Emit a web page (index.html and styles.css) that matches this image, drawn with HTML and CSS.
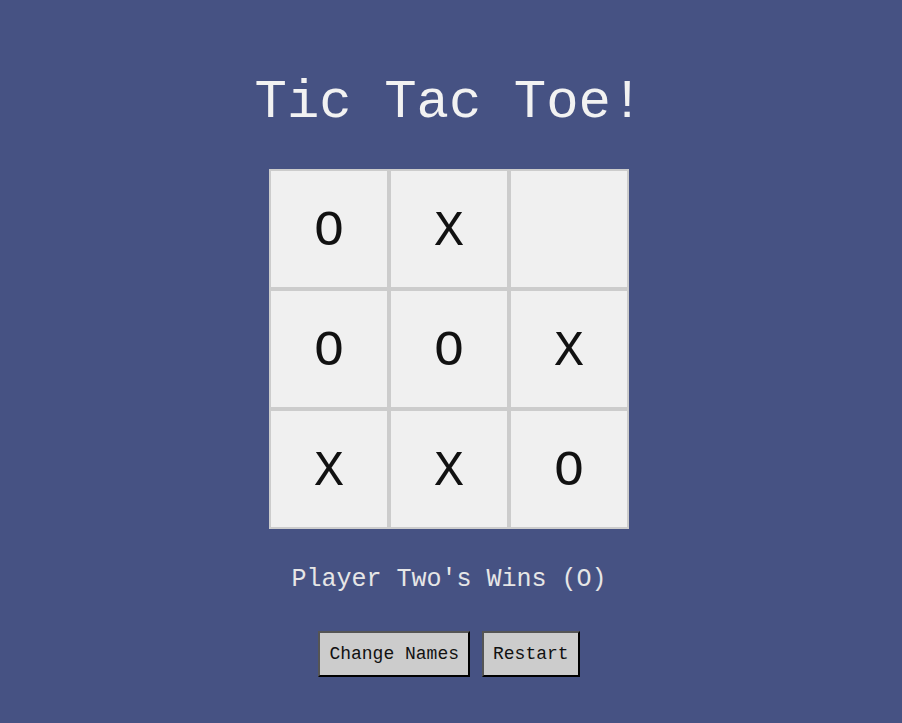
FILE: index.html
```html
<!DOCTYPE html>
<html lang="en">
  <head>
    <meta charset="UTF-8" />
    <meta name="viewport" content="width=device-width, initial-scale=1.0" />
    <title>Tic Tac Toe</title>
    <link rel="stylesheet" href="styles.css">
  </head>
  <body>
    <main class="game">
      <h1 class="title">Tic Tac Toe!</h1>
      <div class="board">
        <div class="cell">O</div>
        <div class="cell">X</div>
        <div class="cell"></div>
        <div class="cell">O</div>
        <div class="cell">O</div>
        <div class="cell">X</div>
        <div class="cell">X</div>
        <div class="cell">X</div>
        <div class="cell">O</div>
      </div>
      <p class="status">Player Two's Wins (O)</p>
      <div class="controls">
        <button class="btn">Change Names</button>
        <button class="btn">Restart</button>
      </div>
    </main>
  </body>
</html>
```

FILE: styles.css
```css
body {
  margin: 0;
  background-color: #465283;
  font-family: "Liberation Mono", "Courier New", monospace;
}

.game {
  display: flex;
  flex-direction: column;
  align-items: center;
  padding: 73px 4px 0 0;
}

.title {
  margin: 0;
  font-size: 54px;
  font-weight: normal;
  line-height: 60px;
  color: #f2f2f2;
}

.board {
  display: grid;
  grid-template-columns: repeat(3, 120px);
  grid-template-rows: repeat(3, 120px);
  margin-top: 36px;
}

.cell {
  display: flex;
  justify-content: center;
  align-items: center;
  box-sizing: border-box;
  padding-top: 4px;
  border: 2px solid #cccccc;
  background-color: #f0f0f0;
  font-size: 50px;
  color: #111;
}

.status {
  margin: 37px 0 0;
  font-size: 25px;
  line-height: 28px;
  color: #e6e6e6;
}

.controls {
  display: flex;
  gap: 12px;
  margin-top: 37px;
}

.btn {
  font-family: "Liberation Mono", "Courier New", monospace;
  font-size: 18px;
  line-height: 20px;
  padding: 11px 9px;
  border: 2px solid;
  border-color: #555555 #000000 #000000 #555555;
  background-color: #cccccc;
  color: #111;
}
```
